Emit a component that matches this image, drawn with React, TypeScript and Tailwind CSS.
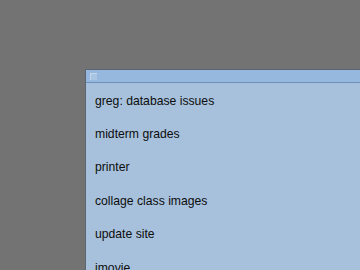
export default function App() {
  const items = [
    "greg: database issues",
    "midterm grades",
    "printer",
    "collage class images",
    "update site",
    "imovie",
  ];
  return (
    <div className="h-[270px] w-[360px] overflow-hidden bg-[#737373] pl-[85px] pt-[69px]">
      <div className="w-[290px] border-l border-t border-[#5c6670] bg-[#a7c1dc]">
        <div className="flex h-[12px] items-center bg-[#96b8de] px-[4px]">
          {/* resize grip */}
          <div className="h-[7px] w-[7px] border-t border-l border-[#c4d6ea] bg-[#a9c4e2]" />
        </div>
        <div className="h-px bg-[#6e92bb]" />
        <ul
          className="pt-[1px] text-[12.2px] text-[#0d0d0d]"
          style={{ fontFamily: '"Liberation Sans", Arial, sans-serif' }}
        >
          {items.map((t) => (
            <li key={t} className="flex h-[33.4px] items-center pl-[9px]">
              {t}
            </li>
          ))}
        </ul>
      </div>
    </div>
  );
}
